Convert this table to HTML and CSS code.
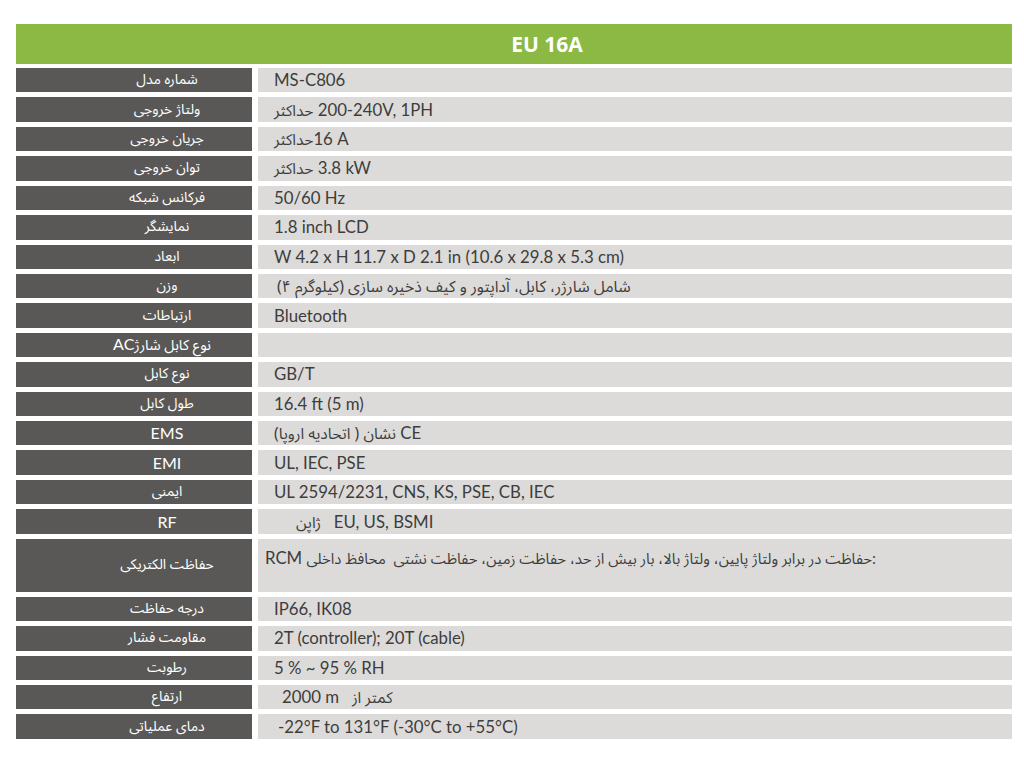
FILE: index.html
```html
<!DOCTYPE html>
<html lang="fa">
<head>
<meta charset="utf-8">
<title>EU 16A</title>
<link rel="stylesheet" href="styles.css">
</head>
<body>
<div class="sheet">
  <div class="head">EU 16A</div>
  <div class="table">
    <div class="row"><div class="lbl"><span>شماره مدل</span></div><div class="val"><span class="t">MS-C806</span></div></div>
    <div class="row"><div class="lbl"><span>ولتاژ خروجی</span></div><div class="val"><span class="t"><bdi class="fa">حداکثر</bdi> 200-240V, 1PH</span></div></div>
    <div class="row"><div class="lbl"><span>جریان خروجی</span></div><div class="val"><span class="t"><bdi class="fa">حداکثر</bdi>16 A</span></div></div>
    <div class="row"><div class="lbl"><span>توان خروجی</span></div><div class="val"><span class="t"><bdi class="fa">حداکثر</bdi> 3.8 kW</span></div></div>
    <div class="row"><div class="lbl"><span>فرکانس شبکه</span></div><div class="val"><span class="t">50/60 Hz</span></div></div>
    <div class="row"><div class="lbl"><span>نمایشگر</span></div><div class="val"><span class="t">1.8 inch LCD</span></div></div>
    <div class="row"><div class="lbl"><span>ابعاد</span></div><div class="val"><span class="t">W 4.2 x H 11.7 x D 2.1 in (10.6 x 29.8 x 5.3 cm)</span></div></div>
    <div class="row"><div class="lbl"><span>وزن</span></div><div class="val in3"><span class="t"><bdi class="fa fa-w" dir="rtl">شامل شارژر، کابل، آداپتور و کیف ذخیره سازی (کیلوگرم ۴)</bdi></span></div></div>
    <div class="row"><div class="lbl"><span>ارتباطات</span></div><div class="val"><span class="t">Bluetooth</span></div></div>
    <div class="row"><div class="lbl lbl-big"><span>نوع کابل شارژ<span class="lat">AC</span></span></div><div class="val"></div></div>
    <div class="row"><div class="lbl"><span>نوع کابل</span></div><div class="val"><span class="t">GB/T</span></div></div>
    <div class="row"><div class="lbl"><span>طول کابل</span></div><div class="val"><span class="t">16.4 ft (5 m)</span></div></div>
    <div class="row"><div class="lbl lat"><span>EMS</span></div><div class="val"><span class="t"><span class="fa">(</span><bdi class="fa" dir="rtl">اتحادیه اروپا</bdi><span class="fa"> )</span> <bdi class="fa">نشان</bdi> CE</span></div></div>
    <div class="row"><div class="lbl lat"><span>EMI</span></div><div class="val"><span class="t">UL, IEC, PSE</span></div></div>
    <div class="row"><div class="lbl"><span>ایمنی</span></div><div class="val"><span class="t">UL 2594/2231, CNS, KS, PSE, CB, IEC</span></div></div>
    <div class="row"><div class="lbl lat"><span>RF</span></div><div class="val in22"><span class="t"><bdi class="fa">ژاپن</bdi>   EU, US, BSMI</span></div></div>
    <div class="row tall"><div class="lbl"><span>حفاظت الکتریکی</span></div><div class="val top in-7"><span class="t">RCM <bdi class="fa fa-long" dir="rtl">حفاظت در برابر ولتاژ پایین، ولتاژ بالا، بار بیش از حد، حفاظت زمین، حفاظت نشتی  محافظ داخلی</bdi><span class="fa fa-long">:</span></span></div></div>
    <div class="row"><div class="lbl"><span>درجه حفاظت</span></div><div class="val"><span class="t">IP66, IK08</span></div></div>
    <div class="row"><div class="lbl"><span>مقاومت فشار</span></div><div class="val"><span class="t">2T (controller); 20T (cable)</span></div></div>
    <div class="row"><div class="lbl"><span>رطوبت</span></div><div class="val"><span class="t">5 % ~ 95 % RH</span></div></div>
    <div class="row"><div class="lbl"><span>ارتفاع</span></div><div class="val in8"><span class="t">2000 m   <bdi class="fa" dir="rtl">کمتر از</bdi></span></div></div>
    <div class="row"><div class="lbl"><span>دمای عملیاتی</span></div><div class="val in4"><span class="t">-22°F to 131°F (-30°C to +55°C)</span></div></div>
  </div>
</div>
</body>
</html>
```

FILE: styles.css
```css
html, body {
  margin: 0;
  padding: 0;
  background: #ffffff;
}

body {
  font-family: "Lato", "DejaVu Sans", sans-serif;
}

.sheet {
  width: 996px;
  padding: 24px 0 0 16px;
}

.head {
  height: 40px;
  background: #8bb943;
  color: #ffffff;
  font-family: "Open Sans", "Liberation Sans", sans-serif;
  font-weight: 700;
  font-size: 21px;
  display: flex;
  align-items: center;
  justify-content: center;
  padding-left: 66px;
  box-sizing: border-box;
}

.table {
  margin-top: 4px;
  display: flex;
  flex-direction: column;
  gap: 5px;
}

.row {
  display: flex;
  gap: 6px;
  height: 24.43px;
}

.row.tall {
  height: 53px;
}

.lbl {
  width: 236px;
  flex: none;
  background: #595856;
  color: #ffffff;
  font-family: "Noto Sans Arabic", "DejaVu Sans", sans-serif;
  font-size: 14px;
  line-height: 18px;
  display: flex;
  align-items: center;
  justify-content: center;
  padding-left: 66px;
  box-sizing: border-box;
  direction: rtl;
}

.lbl.lat,
.lbl .lat {
  font-family: "Lato", "DejaVu Sans", sans-serif;
  font-size: 16px;
}

.lbl-big {
  font-size: 14.5px;
  padding-left: 56px;
}

.val {
  flex: 1;
  background: #dcdbd9;
  color: #3d3d3d;
  font-size: 16.8px;
  line-height: 20px;
  display: flex;
  align-items: center;
  padding-left: 16px;
  direction: ltr;
}

.t {
  white-space: pre;
}

.val .fa {
  font-family: "Noto Sans Arabic", "DejaVu Sans", sans-serif;
  font-size: 15.5px;
  line-height: 8px;
}

.val .fa-w {
  font-size: 15.8px;
}

.val .fa-long {
  font-size: 14.9px;
}

.val.top {
  align-items: flex-start;
  padding-top: 9px;
}

.in3 { padding-left: 19px; }
.in4 { padding-left: 20px; }
.in8 { padding-left: 24px; }
.in22 { padding-left: 38px; }
.in-7 { padding-left: 7px; }
```
